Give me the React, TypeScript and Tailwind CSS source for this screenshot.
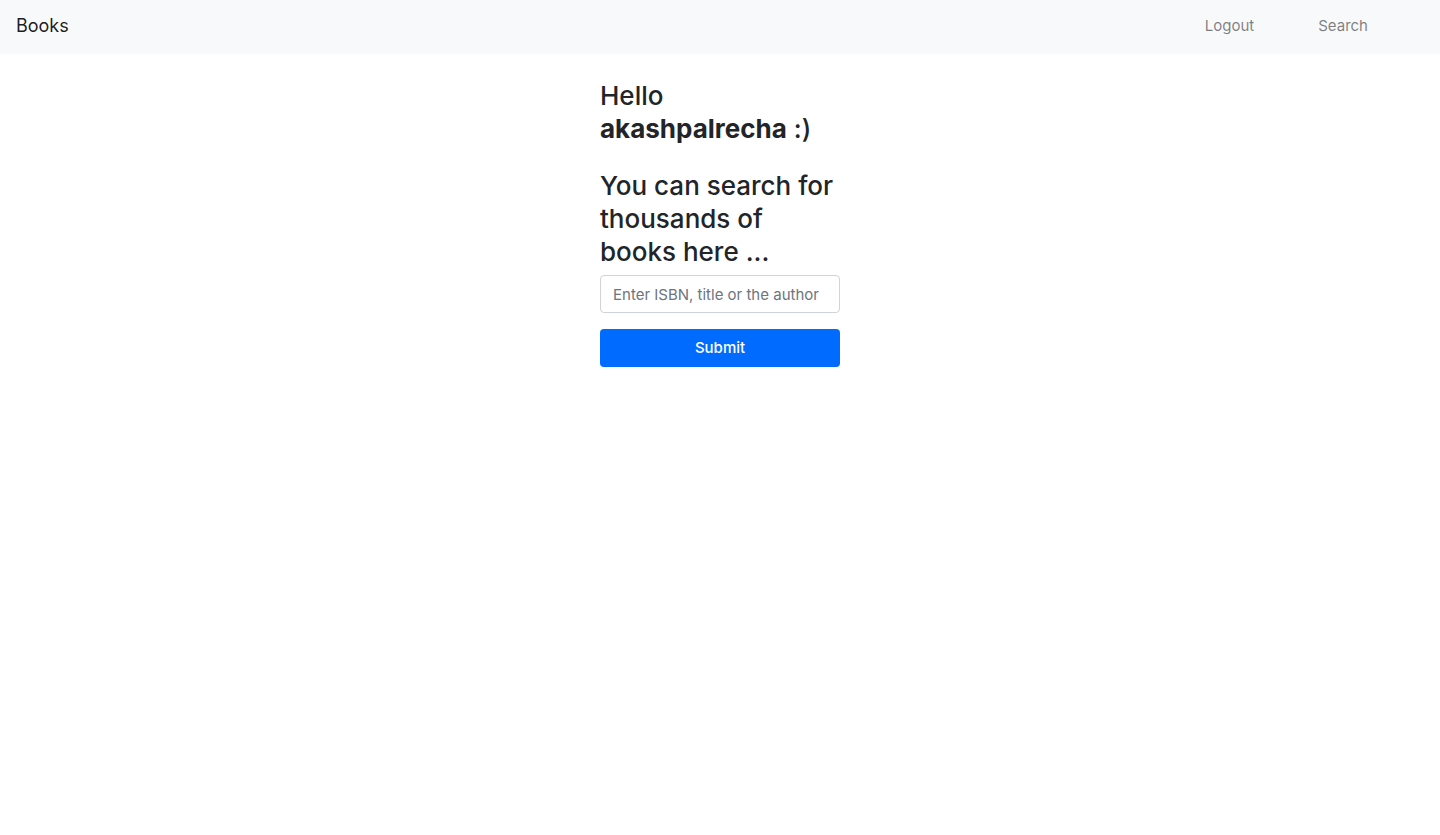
export default function App() {
  return (
    <div className="min-h-screen bg-white font-['Inter','Liberation_Sans',sans-serif] text-[15px] text-[#212529]">
      <nav className="flex items-center justify-between bg-[#f8f9fb] px-4 pt-2 pb-[10px]">
        <a href="#" className="text-lg leading-9 text-black/90">
          Books
        </a>
        <div className="flex gap-16 pr-14 leading-6 text-black/50">
          <a href="#logout">Logout</a>
          <a href="#search">Search</a>
        </div>
      </nav>
      <main className="mx-auto w-60 pt-6">
        <h1 className="mb-6 pt-px text-[26px] leading-[33px] font-medium">
          Hello <strong className="font-bold">akashpalrecha</strong> :)
        </h1>
        <form onSubmit={(event) => event.preventDefault()}>
          <label htmlFor="query" className="mb-[7px] block text-[26px] leading-[33px] font-medium">
            You can search for thousands of books here ...
          </label>
          <input
            id="query"
            type="text"
            placeholder="Enter ISBN, title or the author"
            className="mb-4 block h-[38px] w-full rounded border border-[#ced4da] bg-white px-3 placeholder:text-[#6c757d]"
          />
          <button type="submit" className="h-[38px] w-full rounded bg-[#006bff] font-medium text-white">
            Submit
          </button>
        </form>
      </main>
    </div>
  );
}
